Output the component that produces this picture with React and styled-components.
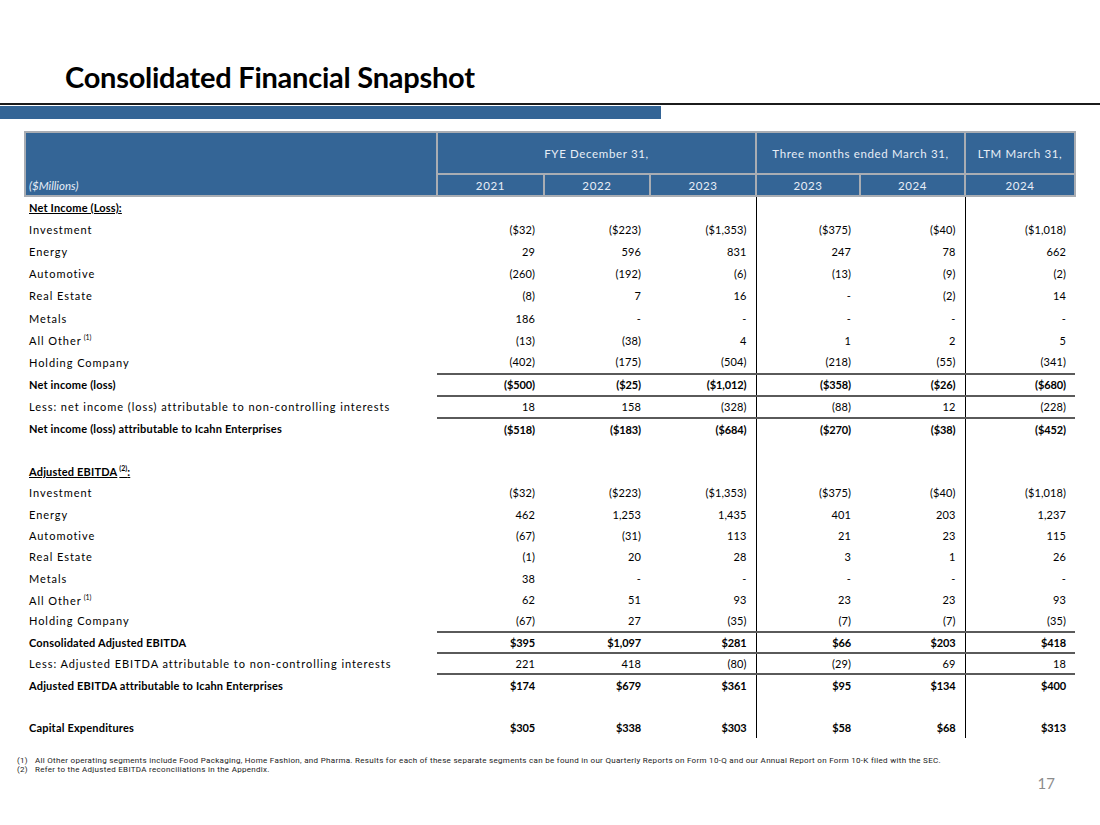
import React from "react";
import styled, { createGlobalStyle, css } from "styled-components";

const Global = createGlobalStyle`
  html, body { margin: 0; padding: 0; background: #fff; }
  body { font-family: "Lato", "Liberation Sans", sans-serif; color: #000; }
`;

const Page = styled.div`
  width: 1100px;
  height: 825px;
  position: relative;
  overflow: hidden;
  display: flex;
  flex-direction: column;
`;

const Title = styled.h1`
  margin: 0;
  padding: 60px 0 0 65px;
  height: 43px;
  font-size: 29px;
  font-weight: 700;
  letter-spacing: -0.25px;
  line-height: 33px;
  color: #000;
`;

const Rule = styled.div`
  border-top: 2px solid #1b1b1b;
  padding-top: 1px;
`;

const BlueBar = styled.div`
  width: 661px;
  height: 13px;
  background: #346596;
`;

const TableWrap = styled.div`
  padding: 12px 0 0 24px;
`;

const Table = styled.table`
  border-collapse: collapse;
  table-layout: fixed;
  width: 1050px;
  font-size: 11px;
`;

const HeadCell = styled.th`
  background: #346596;
  color: #e8eef6;
  font-weight: 400;
  font-size: 11.5px;
  border: 2px solid #a9adb3;
  letter-spacing: 0.65px;
  text-align: center;
  height: ${(p) => p.$h}px;
  padding: 0;
  vertical-align: middle;
  ${(p) =>
    p.$corner &&
    css`
      text-align: left;
      vertical-align: bottom;
      font-style: italic;
      letter-spacing: 0;
      padding: 0 0 3px 3px;
    `}
`;

const BodyRow = styled.tr`
  height: ${(p) => p.$h}px;
`;

const LabelCell = styled.td`
  padding: 0 0 0 4px;
  white-space: nowrap;
  font-weight: ${(p) => (p.$bold ? 700 : 400)};
  letter-spacing: ${(p) => (p.$bold ? "0.18px" : "0.95px")};
  text-decoration: ${(p) => (p.$underline ? "underline" : "none")};
  vertical-align: middle;
`;

const ValueCell = styled.td`
  padding: 0 9px 0 0;
  text-align: right;
  white-space: nowrap;
  font-weight: ${(p) => (p.$bold ? 700 : 400)};
  letter-spacing: ${(p) => (p.$bold ? "-0.1px" : "0.1px")};
  border-left: ${(p) => (p.$divider ? "1px solid #000" : "none")};
  border-top: ${(p) => (p.$rule ? "2px solid #5a5a5a" : "none")};
  vertical-align: middle;
`;

const Sup = styled.sup`
  font-size: 7px;
  vertical-align: 5px;
  margin-left: 2px;
  letter-spacing: 0;
`;

const Footnotes = styled.div`
  padding: 18px 0 0 17px;
  font-family: "Roboto", "Liberation Sans", sans-serif;
  font-size: 8px;
  letter-spacing: 0.3px;
  line-height: 9px;
  color: #1a1a1a;
`;

const Note = styled.div`
  display: flex;
`;

const NoteNum = styled.span`
  width: 18px;
  flex: none;
`;

const PageNum = styled.div`
  align-self: flex-end;
  margin: 0 45px 0 0;
  font-size: 15px;
  color: #8c8c8c;
`;

const colWidths = [412, 107, 106, 106, 104, 105, 110];
const dividers = [false, false, false, true, false, true];

const sections = [
  {
    title: "Net Income (Loss)",
    h: 22.2,
    rows: [
      ["Investment", ["($32)", "($223)", "($1,353)", "($375)", "($40)", "($1,018)"]],
      ["Energy", ["29", "596", "831", "247", "78", "662"]],
      ["Automotive", ["(260)", "(192)", "(6)", "(13)", "(9)", "(2)"]],
      ["Real Estate", ["(8)", "7", "16", "-", "(2)", "14"]],
      ["Metals", ["186", "-", "-", "-", "-", "-"]],
      ["All Other", ["(13)", "(38)", "4", "1", "2", "5"], { sup: "(1)" }],
      ["Holding Company", ["(402)", "(175)", "(504)", "(218)", "(55)", "(341)"]],
      ["Net income (loss)", ["($500)", "($25)", "($1,012)", "($358)", "($26)", "($680)"], { bold: true, rule: true }],
      ["Less: net income (loss) attributable to non-controlling interests", ["18", "158", "(328)", "(88)", "12", "(228)"], { rule: true }],
      ["Net income (loss) attributable to Icahn Enterprises", ["($518)", "($183)", "($684)", "($270)", "($38)", "($452)"], { bold: true, rule: true }],
    ],
  },
  {
    title: "Adjusted EBITDA",
    titleSup: "(2)",
    h: 21.4,
    rows: [
      ["Investment", ["($32)", "($223)", "($1,353)", "($375)", "($40)", "($1,018)"]],
      ["Energy", ["462", "1,253", "1,435", "401", "203", "1,237"]],
      ["Automotive", ["(67)", "(31)", "113", "21", "23", "115"]],
      ["Real Estate", ["(1)", "20", "28", "3", "1", "26"]],
      ["Metals", ["38", "-", "-", "-", "-", "-"]],
      ["All Other", ["62", "51", "93", "23", "23", "93"], { sup: "(1)" }],
      ["Holding Company", ["(67)", "27", "(35)", "(7)", "(7)", "(35)"]],
      ["Consolidated Adjusted EBITDA", ["$395", "$1,097", "$281", "$66", "$203", "$418"], { bold: true, rule: true }],
      ["Less: Adjusted EBITDA attributable to non-controlling interests", ["221", "418", "(80)", "(29)", "69", "18"], { rule: true }],
      ["Adjusted EBITDA attributable to Icahn Enterprises", ["$174", "$679", "$361", "$95", "$134", "$400"], { bold: true, rule: true }],
    ],
  },
];

const EmptyValues = () =>
  dividers.map((d, i) => <ValueCell key={i} $divider={d} />);

function DataRow({ label, values, opts = {}, h }) {
  return (
    <BodyRow $h={h}>
      <LabelCell $bold={opts.bold}>
        {label}
        {opts.sup && <Sup>{opts.sup}</Sup>}
      </LabelCell>
      {values.map((v, i) => (
        <ValueCell key={i} $bold={opts.bold} $rule={opts.rule} $divider={dividers[i]}>
          {v}
        </ValueCell>
      ))}
    </BodyRow>
  );
}

export default function App() {
  return (
    <Page>
      <Global />
      <Title>Consolidated Financial Snapshot</Title>
      <Rule>
        <BlueBar />
      </Rule>
      <TableWrap>
        <Table>
          <colgroup>
            {colWidths.map((w, i) => (
              <col key={i} style={{ width: w }} />
            ))}
          </colgroup>
          <thead>
            <tr>
              <HeadCell $h={40} $corner rowSpan={2}>
                ($Millions)
              </HeadCell>
              <HeadCell $h={40} colSpan={3}>FYE December 31,</HeadCell>
              <HeadCell $h={40} colSpan={2}>Three months ended March 31,</HeadCell>
              <HeadCell $h={40}>LTM March 31,</HeadCell>
            </tr>
            <tr>
              {["2021", "2022", "2023", "2023", "2024", "2024"].map((y, i) => (
                <HeadCell key={i} $h={20}>{y}</HeadCell>
              ))}
            </tr>
          </thead>
          <tbody>
            {sections.map((s, si) => (
              <React.Fragment key={si}>
                {si > 0 && (
                  <BodyRow $h={20.5}>
                    <LabelCell />
                    <EmptyValues />
                  </BodyRow>
                )}
                <BodyRow $h={s.h}>
                  <LabelCell $bold $underline>
                    {s.title}
                    {s.titleSup && <Sup>{s.titleSup}</Sup>}:
                  </LabelCell>
                  <EmptyValues />
                </BodyRow>
                {s.rows.map(([label, values, opts], ri) => (
                  <DataRow key={ri} label={label} values={values} opts={opts} h={s.h} />
                ))}
              </React.Fragment>
            ))}
            <BodyRow $h={20.5}>
              <LabelCell />
              <EmptyValues />
            </BodyRow>
            <DataRow
              label="Capital Expenditures"
              values={["$305", "$338", "$303", "$58", "$68", "$313"]}
              opts={{ bold: true }}
              h={22}
            />
          </tbody>
        </Table>
      </TableWrap>
      <Footnotes>
        <Note>
          <NoteNum>(1)</NoteNum>
          <span>
            All Other operating segments include Food Packaging, Home Fashion, and Pharma. Results for each of these separate segments can be found in our Quarterly Reports on Form 10-Q and our Annual Report on Form 10-K filed with the SEC.
          </span>
        </Note>
        <Note>
          <NoteNum>(2)</NoteNum>
          <span>Refer to the Adjusted EBITDA reconciliations in the Appendix.</span>
        </Note>
      </Footnotes>
      <PageNum>17</PageNum>
    </Page>
  );
}
